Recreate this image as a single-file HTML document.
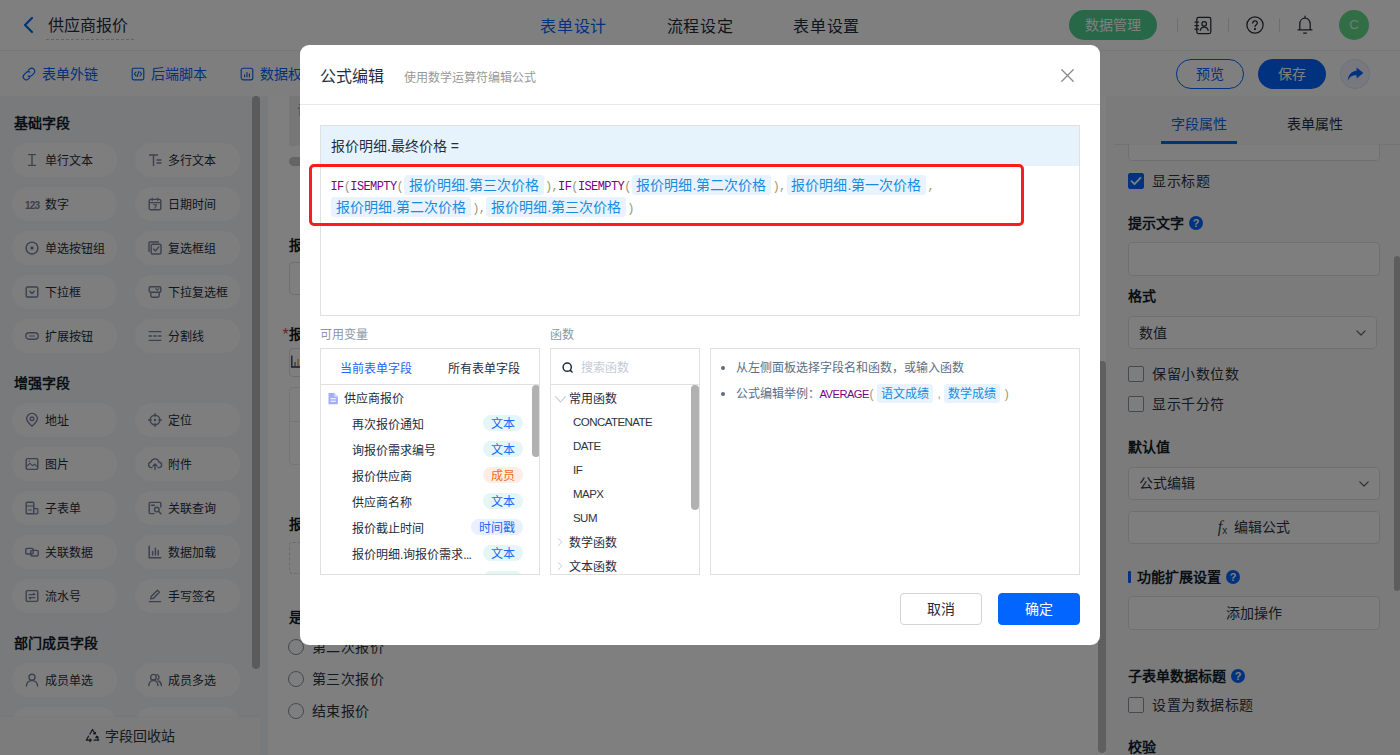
<!DOCTYPE html>
<html lang="zh-CN">
<head>
<meta charset="utf-8">
<title>公式编辑</title>
<style>
*{box-sizing:border-box;margin:0;padding:0}
html,body{width:1400px;height:755px;overflow:hidden;background:#fff}
body{font-family:"Liberation Sans",sans-serif;font-size:14px;color:#1f2d3d;position:relative}
.abs{position:absolute}
svg{display:block;overflow:visible}
/* ---------- top bar ---------- */
#top{position:absolute;left:0;top:0;width:1400px;height:51px;background:#fff;border-bottom:1px solid #ececec}
#top .back{position:absolute;left:22px;top:16px}
#top .ttl{position:absolute;left:46px;top:13px;width:88px;height:27px;line-height:26px;font-size:16px;padding-left:2px;border-bottom:1px dashed #c8c8c8;white-space:nowrap;color:#1f2d3d}
#top .tab{position:absolute;top:13.800px;line-height:26px;font-size:16px;letter-spacing:.75px;white-space:nowrap;color:#1f2d3d}
#top .tab.on{color:#0265ff}
#top .mgr{position:absolute;left:1069px;top:10px;width:88px;height:30px;border-radius:15px;background:#4dd090;color:#fff;font-size:14px;line-height:30px;text-align:center}
#top .sep{position:absolute;top:18px;width:1px;height:14px;background:#dcdcdc}
#top .av{position:absolute;left:1339px;top:10px;width:30px;height:30px;border-radius:15px;background:#62dc8c;color:#e9f7ee;font-size:13px;line-height:30px;text-align:center}
/* ---------- toolbar ---------- */
#bar{position:absolute;left:0;top:51px;width:1400px;height:45px;background:#fcfcfd}
#bar .lnk{position:absolute;top:12px;line-height:22px;font-size:14px;color:#0265ff;white-space:nowrap}
#bar .lnk svg{position:absolute;top:4px}
#bar .pv{position:absolute;left:1176px;top:8px;width:68px;height:30px;border-radius:15px;border:1px solid #0265ff;color:#0265ff;font-size:14px;line-height:28px;text-align:center;background:#fff}
#bar .sv{position:absolute;left:1258px;top:8px;width:68px;height:30px;border-radius:15px;background:#0265ff;color:#fff;font-size:14px;line-height:30px;text-align:center}
#bar .sh{position:absolute;left:1340px;top:8px;width:30px;height:30px;border-radius:15px;background:#eef3fd;border:1px solid #d6e2fa}
/* ---------- left panel ---------- */
#left{position:absolute;left:0;top:96px;width:268px;height:659px;background:#f3f5f9;overflow:hidden}
#left h4{position:absolute;left:14px;font-size:14px;font-weight:bold;line-height:20px;color:#141e2b;white-space:nowrap}
#left .p{position:absolute;width:105px;height:34px;border-radius:17px;background:#fdfdfe;font-size:12px;line-height:37px;color:#1f2d3d;white-space:nowrap;padding-left:33px}
#left .n123{position:absolute;left:13px;top:-.5px;font-size:10px;font-weight:bold;color:#76819e;letter-spacing:-.75px}
#left .p svg{position:absolute;left:12.800px;top:10px}
#left .c1{left:12px}#left .c2{left:135px}#left .c2 svg{left:13px}#left .c2{padding-left:32.500px}
#left .sb{position:absolute;left:252px;top:0;width:8px;height:573px;border-radius:4px;background:#b6b6b6}
#left .bin{position:absolute;left:0;top:621px;width:260px;height:38px;background:#f8f9fb;font-size:14px;line-height:38px;color:#2b3442;padding-left:105px;box-shadow:0 -1px 3px rgba(0,0,0,.04)}
#left .bin .rc{position:absolute;left:85px;top:11px}
/* ---------- center ---------- */
#mid{position:absolute;left:268px;top:96px;width:838px;height:659px;background:#fff;overflow:hidden}
#mid h5{position:absolute;left:21px;font-size:14px;font-weight:bold;line-height:20px;color:#141e2b;white-space:nowrap}
#mid .bx{position:absolute;left:21px;width:790px;border:1px solid #dfe1e6;border-radius:4px;background:#fff}
#mid .rd{position:absolute;left:20px;width:16px;height:16px;border-radius:8px;border:1px solid #8b93a8;background:#fff}
#mid .rl{position:absolute;left:44px;font-size:14px;letter-spacing:.4px;line-height:20px;color:#2b3442;white-space:nowrap}
#mid .vs{position:absolute;left:830px;top:264.500px;width:7.700px;height:392px;border-radius:4px;background:#bfbfbf}
/* ---------- right panel ---------- */
#right{position:absolute;left:1106px;top:96px;width:294px;height:659px;background:#f6f7f9;overflow:hidden}
#right .tb{position:absolute;top:18px;line-height:20px;font-size:14px;white-space:nowrap;color:#1f2d3d}
#right .tb.on{color:#0265ff}
#right .ul{position:absolute;left:55px;top:45px;width:76px;height:3px;background:#0265ff}
#right .hl{position:absolute;left:8px;top:48px;width:286px;height:1px;background:#e4e6ea}
#right .inp{position:absolute;left:22px;width:252px;height:34px;border:1px solid #dfe1e6;border-radius:4px;background:#fdfdfe}
#right .btn{text-align:center;line-height:32px;font-size:14px;color:#2b3442;white-space:nowrap}
#right .sel{line-height:32px;font-size:14px;color:#2b3442;padding-left:10px;white-space:nowrap}
#right .sel svg{position:absolute;right:10px;top:13px}
#right h5{position:absolute;left:22px;font-size:14px;font-weight:bold;line-height:20px;color:#141e2b;white-space:nowrap}
#right .cb{position:absolute;left:22px;width:16px;height:16px;border:1px solid #8b93a8;border-radius:2px;background:#fdfdfe}
#right .cb.on{background:#0265ff;border-color:#0265ff}
#right .lb{position:absolute;left:46px;font-size:14px;letter-spacing:.5px;line-height:20px;color:#2b3442;white-space:nowrap}
#right .q{position:absolute;width:14px;height:14px;border-radius:7px;background:#0265ff;color:#fff;font-size:11px;font-weight:bold;line-height:14px;text-align:center}
#right .sbar{position:absolute;left:288px;top:160px;width:6px;height:335px;border-radius:3px;background:#bababa}
/* ---------- overlay + modal ---------- */
#mask{position:absolute;left:0;top:0;width:1400px;height:755px;background:rgba(0,0,0,.5)}
#dlg{position:absolute;left:300px;top:45px;width:800px;height:600px;background:#fff;border-radius:9px}
#dlg .hd{position:absolute;left:0;top:0;width:800px;height:60px;border-bottom:1px solid #e9e9e9}
#dlg .hd b{position:absolute;left:19.500px;top:20px;font-size:16px;font-weight:normal;line-height:24px;color:#1f2d3d;white-space:nowrap}
#dlg .hd i{position:absolute;left:104px;top:22.500px;font-size:12px;font-style:normal;line-height:20px;color:#989898;white-space:nowrap}
#dlg .hd svg{position:absolute;left:761px;top:23.500px}
#ed{position:absolute;left:20px;top:80px;width:760px;height:191px;border:1px solid #e0e0e0;background:#fff}
#ed .eh{position:absolute;left:0;top:0;width:758px;height:40px;background:#e6f3fd;font-size:14px;line-height:40px;padding-left:10px;color:#1f2d3d;white-space:nowrap}
#ed .cm{position:absolute;left:9.500px;top:48px;width:700px;font-family:"Liberation Mono",monospace;font-size:12px;letter-spacing:-.6px;line-height:22px;color:#999977;white-space:nowrap}
#ed .cm .k{color:#770088}
#ed .cm>div{position:relative;top:1.500px}
#ed .cm .t{position:relative;top:-1.500px}
#ed .cm .t,#dlg .ex .t{display:inline-block;font-family:"Liberation Sans",sans-serif;font-size:14px;line-height:20px;height:20px;color:#178cdf;background:#e9f3fd;border-radius:3px;padding:0 4.800px;margin:0 1.400px 0 .9px;vertical-align:top;margin-top:1px;letter-spacing:0}
#red{position:absolute;left:9px;top:119px;width:715px;height:62px;border:3.500px solid #fb1d1a;border-radius:5px}
#dlg .cap{position:absolute;top:280px;font-size:12px;line-height:20px;color:#8c96a8;white-space:nowrap}
#dlg .pn{position:absolute;top:303px;height:227px;border:1px solid #e0e0e0;background:#fff;overflow:hidden}
#dlg .pn .ph{position:absolute;left:0;top:0;width:100%;height:36px;border-bottom:1px solid #e0e0e0}
#dlg .vsb{position:absolute;width:8px;border-radius:4px;background:#b1b1b1}
#pv .tb{position:absolute;top:10px;font-size:12px;line-height:20px;white-space:nowrap;color:#1f2d3d}
#pv .tb.on{color:#1d66fb}
#pv .it{position:absolute;margin-top:1px;left:31px;font-size:12px;line-height:20px;color:#1f2d3d;white-space:nowrap}
#pv .tg{position:absolute;margin-top:-.3px;right:16px;height:16px;border-radius:8px;padding:0 8px;font-size:12px;line-height:19px;white-space:nowrap;background:#e5f6f7;color:#1d66fb}
#pv .tg.m{background:#fdeee5;color:#f26b1d}
#pv .tg.d{background:#e9f0ff;color:#1d66fb}
#pf .it{position:absolute;font-size:12px;line-height:20px;color:#1f2d3d;white-space:nowrap}
#pf .fn{left:22px;margin-top:-.7px;font-size:11.500px;letter-spacing:-.55px;color:#2b3442}
#dlg .ex{position:absolute;left:24.500px;font-size:12px;line-height:20px;color:#5e6d82;white-space:nowrap}
#dlg .ex:before{content:"";position:absolute;left:-14.500px;top:8px;width:4px;height:4px;border-radius:2px;background:#5e6d82}
#dlg .ex .t{font-size:12px;padding:0 4px;margin:0 4.300px 0 3.700px;line-height:21px;height:19px;margin-top:-.5px}
#dlg .bt{position:absolute;top:548px;width:82px;height:32px;border-radius:4px;font-size:14px;line-height:30px;text-align:center;border:1px solid #d4d4d4;color:#1f2d3d;background:#fff}
#dlg .bt.ok{background:#0265ff;border-color:#0265ff;color:#fff}
</style>
</head>
<body>
<div id="top">
  <svg class="back" width="12" height="18" viewBox="0 0 12 18"><path d="M10 2 L3 9 L10 16" fill="none" stroke="#0265ff" stroke-width="2.2" stroke-linecap="round" stroke-linejoin="round"/></svg>
  <div class="ttl">供应商报价</div>
  <div class="tab on" style="left:540px">表单设计</div>
  <div class="tab" style="left:666.500px">流程设定</div>
  <div class="tab" style="left:793px">表单设置</div>
  <div class="mgr">数据管理</div>
  <div class="sep" style="left:1177px"></div>
  <div class="sep" style="left:1228px"></div>
  <div class="sep" style="left:1279px"></div>
  <svg class="abs" style="left:1194px;top:16px" width="18" height="19" viewBox="0 0 18 19" fill="none" stroke="#2b2e3b" stroke-width="1.250" stroke-linecap="round" stroke-linejoin="round"><rect x="2.800" y="1.400" width="14" height="16.200" rx="1.800"/><path d="M.9 6h3.600M.9 9.500h3.600M.9 13h3.600"/><circle cx="10.200" cy="7.800" r="2.300"/><path d="M6.200 14.400c.5-2.300 2-3.400 4-3.400s3.500 1.100 4 3.400"/></svg>
  <svg class="abs" style="left:1246px;top:16px" width="18" height="18" viewBox="0 0 18 18" fill="none" stroke="#2b2e3b" stroke-width="1.250" stroke-linecap="round" stroke-linejoin="round"><circle cx="9" cy="9" r="8.1"/><path d="M6.700 7.100c0-1.400 1-2.300 2.300-2.300s2.300.9 2.300 2.100c0 1.700-2.300 1.800-2.300 3.600"/><circle cx="9" cy="13" r=".5" fill="#2a2a2a"/></svg>
  <svg class="abs" style="left:1296px;top:15px" width="18" height="20" viewBox="0 0 18 20" fill="none" stroke="#2b2e3b" stroke-width="1.250" stroke-linecap="round" stroke-linejoin="round"><path d="M9 1.200v1.600M3.800 14.600V9c0-3.400 2.200-5.800 5.200-5.800s5.200 2.400 5.200 5.800v5.600M2 14.800h14M7.600 18h2.800"/></svg>
  <div class="av">C</div>
</div>
<div id="bar">
  <div class="lnk" style="left:42px"><svg style="left:-20px" width="14" height="14" viewBox="0 0 14 14" fill="none" stroke="#0265ff" stroke-width="1.150" stroke-linecap="round"><path d="M6.300 3.400l1.300-1.300a3 3 0 0 1 4.300 4.300l-2 2a3 3 0 0 1-3.600.5"/><path d="M7.700 10.600l-1.300 1.300a3 3 0 0 1-4.300-4.300l2-2a3 3 0 0 1 3.600-.5"/></svg>表单外链</div>
  <div class="lnk" style="left:151px"><svg style="left:-20px" width="14" height="14" viewBox="0 0 14 14" fill="none" stroke="#0265ff" stroke-width="1.150" stroke-linecap="round" stroke-linejoin="round"><rect x="1.200" y="1.200" width="11.600" height="11.600" rx="1.500"/><path d="M5 5L3.400 7 5 9M9 5l1.600 2L9 9M7.800 4.600L6.200 9.400"/></svg>后端脚本</div>
  <div class="lnk" style="left:260px"><svg style="left:-20px" width="14" height="14" viewBox="0 0 14 14" fill="none" stroke="#0265ff" stroke-width="1.150" stroke-linecap="round" stroke-linejoin="round"><rect x="1.200" y="1.200" width="11.600" height="11.600" rx="2"/><path d="M4.600 9.800V7.800M7 9.800V5.600M9.400 9.800V6.800"/></svg>数据权限</div>
  <div class="pv">预览</div>
  <div class="sv">保存</div>
  <div class="sh"><svg style="position:absolute;left:6px;top:7px" width="17" height="15" viewBox="0 0 17 15"><path d="M9.600 0.600L16.400 6 9.600 11.400V8.200C5.400 8 2.600 9.800.8 13.600 1.200 7.800 4.400 4.200 9.600 3.800Z" fill="#0265ff"/></svg></div>
</div>
<div id="left">
  <h4 style="top:17px">基础字段</h4>
  <div class="p c1" style="top:47px"><svg width="14" height="14" viewBox="0 0 14 14" fill="none" stroke="#77829e" stroke-width="1.400" stroke-linecap="round" stroke-linejoin="round" ><path d="M3.600 1.600h6.800M3.600 12.400h6.800M7 1.600v10.800"/></svg>单行文本</div>
  <div class="p c2" style="top:47px"><svg width="14" height="14" viewBox="0 0 14 14" fill="none" stroke="#77829e" stroke-width="1.400" stroke-linecap="round" stroke-linejoin="round" ><path d="M1.500 2h8M5.500 2v10.500M9 7h4M9 10h4"/></svg>多行文本</div>
  <div class="p c1" style="top:91px"><span class="n123">123</span>数字</div>
  <div class="p c2" style="top:91px"><svg width="14" height="14" viewBox="0 0 14 14" fill="none" stroke="#77829e" stroke-width="1.400" stroke-linecap="round" stroke-linejoin="round" ><rect x="1.200" y="2.400" width="11.600" height="10.400" rx="1.600"/><path d="M4.200 1v2.600M9.800 1v2.600M1.400 5.600h11.200M5.400 7.800h3.200l-1.800 3.400" stroke-width="1.100"/></svg>日期时间</div>
  <div class="p c1" style="top:135px"><svg width="14" height="14" viewBox="0 0 14 14" fill="none" stroke="#77829e" stroke-width="1.400" stroke-linecap="round" stroke-linejoin="round" ><circle cx="7" cy="7" r="5.900" stroke-width="1.450"/><circle cx="7" cy="7" r="1.750" fill="#77829e" stroke="none"/></svg>单选按钮组</div>
  <div class="p c2" style="top:135px"><svg width="14" height="14" viewBox="0 0 14 14" fill="none" stroke="#77829e" stroke-width="1.400" stroke-linecap="round" stroke-linejoin="round" ><rect x="3.200" y="3.200" width="9.800" height="9.800" rx="1.200"/><path d="M1 10.400V2.200C1 1.500 1.500 1 2.200 1h8.200M5.600 8l1.900 1.900L10.800 6"/></svg>复选框组</div>
  <div class="p c1" style="top:179px"><svg width="14" height="14" viewBox="0 0 14 14" fill="none" stroke="#77829e" stroke-width="1.400" stroke-linecap="round" stroke-linejoin="round" ><rect x="1.200" y="2" width="11.600" height="10" rx="1.200"/><path d="M4.800 6.200L7 8.400l2.200-2.200"/></svg>下拉框</div>
  <div class="p c2" style="top:179px"><svg width="14" height="14" viewBox="0 0 14 14" fill="none" stroke="#77829e" stroke-width="1.400" stroke-linecap="round" stroke-linejoin="round" ><rect x="1.200" y="1.800" width="11.600" height="5.400" rx="1.200"/><path d="M2.800 7.400v3.400c0 .9.500 1.400 1.400 1.400h5.600c.9 0 1.400-.5 1.400-1.400V7.400"/><path d="M7.800 3.600l1.500 1.500 1.500-1.500" stroke-width="1.100"/></svg>下拉复选框</div>
  <div class="p c1" style="top:223px"><svg width="14" height="14" viewBox="0 0 14 14" fill="none" stroke="#77829e" stroke-width="1.400" stroke-linecap="round" stroke-linejoin="round" ><rect x="0.800" y="3.800" width="12.400" height="6.400" rx="3.200"/><path d="M4.400 7h5.200" stroke-width="1.100"/></svg>扩展按钮</div>
  <div class="p c2" style="top:223px"><svg width="14" height="14" viewBox="0 0 14 14" fill="none" stroke="#77829e" stroke-width="1.400" stroke-linecap="round" stroke-linejoin="round" ><path d="M1.200 2.600h11.600M1.200 11.400h11.600"/><path d="M1.200 7h2.400M5.800 7h2.400M10.400 7h2.400"/></svg>分割线</div>
  <h4 style="top:277px">增强字段</h4>
  <div class="p c1" style="top:307px"><svg width="14" height="14" viewBox="0 0 14 14" fill="none" stroke="#77829e" stroke-width="1.400" stroke-linecap="round" stroke-linejoin="round" ><path d="M7 13.200C3.400 10 1.600 7.800 1.600 5.800a5.400 5.400 0 0 1 10.800 0C12.400 7.800 10.600 10 7 13.200z"/><circle cx="7" cy="5.800" r="1.800"/></svg>地址</div>
  <div class="p c2" style="top:307px"><svg width="14" height="14" viewBox="0 0 14 14" fill="none" stroke="#77829e" stroke-width="1.400" stroke-linecap="round" stroke-linejoin="round" ><circle cx="7" cy="7" r="4.800"/><circle cx="7" cy="7" r="1.200" fill="#77829e" stroke="none"/><path d="M7 .6v2.600M7 10.800v2.600M.6 7h2.600M10.800 7h2.600"/></svg>定位</div>
  <div class="p c1" style="top:351px"><svg width="14" height="14" viewBox="0 0 14 14" fill="none" stroke="#77829e" stroke-width="1.400" stroke-linecap="round" stroke-linejoin="round" ><rect x="1.200" y="1.600" width="11.600" height="10.800" rx="1.400"/><path d="M1.600 9.400L5 6.400l2.600 2.200 1.800-1.400 3 2.400" stroke-width="1.100"/><circle cx="4.400" cy="4.400" r=".7" fill="#77829e" stroke="none"/></svg>图片</div>
  <div class="p c2" style="top:351px"><svg width="14" height="14" viewBox="0 0 14 14" fill="none" stroke="#77829e" stroke-width="1.400" stroke-linecap="round" stroke-linejoin="round" ><path d="M4 10.600H3.400a2.800 2.800 0 0 1-.4-5.560A4.100 4.100 0 0 1 11 5.200a2.700 2.700 0 0 1-.2 5.400H10M7 12.600V7.200M5 9l2-2 2 2"/></svg>附件</div>
  <div class="p c1" style="top:395px"><svg width="14" height="14" viewBox="0 0 14 14" fill="none" stroke="#77829e" stroke-width="1.400" stroke-linecap="round" stroke-linejoin="round" ><rect x="1.200" y="1.200" width="7.600" height="11.600" rx="1"/><path d="M1.400 5h7.200M8.800 7.600h3.200a.800.800 0 0 1 .8.800v3.600a.800.800 0 0 1-.8.800H8.800M3.600 9h2.800" stroke-width="1.200"/></svg>子表单</div>
  <div class="p c2" style="top:395px"><svg width="14" height="14" viewBox="0 0 14 14" fill="none" stroke="#77829e" stroke-width="1.400" stroke-linecap="round" stroke-linejoin="round" ><path d="M12.800 6V2.400a1 1 0 0 0-1-1H2.200a1 1 0 0 0-1 1v9.200a1 1 0 0 0 1 1H6"/><circle cx="8.800" cy="8.600" r="2.300"/><path d="M10.600 10.400l2.400 2.400M3.400 4.200h3"/></svg>关联查询</div>
  <div class="p c1" style="top:439px"><svg width="14" height="14" viewBox="0 0 14 14" fill="none" stroke="#77829e" stroke-width="1.400" stroke-linecap="round" stroke-linejoin="round" ><rect x=".8" y="3.400" width="7.400" height="5.600" rx="1.200"/><rect x="5.800" y="5.400" width="7.400" height="5.600" rx="1.200"/></svg>关联数据</div>
  <div class="p c2" style="top:439px"><svg width="14" height="14" viewBox="0 0 14 14" fill="none" stroke="#77829e" stroke-width="1.400" stroke-linecap="round" stroke-linejoin="round" ><path d="M1.200 1.200v11.600h11.600M4.600 10V6.600M7.400 10V3.200M10.200 10V5.400" stroke-width="1.500"/></svg>数据加载</div>
  <div class="p c1" style="top:483px"><svg width="14" height="14" viewBox="0 0 14 14" fill="none" stroke="#77829e" stroke-width="1.400" stroke-linecap="round" stroke-linejoin="round" ><rect x="1.200" y="1.600" width="11.600" height="10.800" rx="1.400"/><path d="M4 5.600h6M4 8.600h6M8.400 4.200l1.600 1.400M5.600 10L4 8.600" stroke-width="1.100"/></svg>流水号</div>
  <div class="p c2" style="top:483px"><svg width="14" height="14" viewBox="0 0 14 14" fill="none" stroke="#77829e" stroke-width="1.400" stroke-linecap="round" stroke-linejoin="round" ><path d="M2.600 9.800l.6-2.400L9.400 1.200l2 2L5.200 9.400l-2.600.4zM1.400 12.600h11.200"/></svg>手写签名</div>
  <h4 style="top:537px">部门成员字段</h4>
  <div class="p c1" style="top:567px"><svg width="14" height="14" viewBox="0 0 14 14" fill="none" stroke="#77829e" stroke-width="1.400" stroke-linecap="round" stroke-linejoin="round" ><circle cx="7" cy="4.200" r="3"/><path d="M1.400 13c.2-3.400 2.400-5.400 5.600-5.400s5.400 2 5.600 5.400"/></svg>成员单选</div>
  <div class="p c2" style="top:567px"><svg width="14" height="14" viewBox="0 0 14 14" fill="none" stroke="#77829e" stroke-width="1.400" stroke-linecap="round" stroke-linejoin="round" ><circle cx="5.400" cy="4.200" r="2.800"/><path d="M.8 12.600c.2-3.200 2-5 4.600-5s4.400 1.800 4.600 5M8.800 1.600a2.800 2.800 0 0 1 .6 5.300M10.600 8c1.600.6 2.600 2.200 2.800 4.600"/></svg>成员多选</div>
  <div class="p c1" style="top:611px"><svg width="14" height="14" viewBox="0 0 14 14" fill="none" stroke="#77829e" stroke-width="1.400" stroke-linecap="round" stroke-linejoin="round" ><circle cx="7" cy="7" r="5"/></svg>部门单选</div>
  <div class="p c2" style="top:611px"><svg width="14" height="14" viewBox="0 0 14 14" fill="none" stroke="#77829e" stroke-width="1.400" stroke-linecap="round" stroke-linejoin="round" ><circle cx="7" cy="7" r="5"/></svg>部门多选</div>
  <div class="sb"></div>
  <div class="bin"><svg class="rc" width="15" height="14" viewBox="0 0 15 14" fill="none" stroke="#2b3442" stroke-width="1.250" stroke-linecap="round" stroke-linejoin="round"><path d="M4.900 6L7.500 1.500 10.100 6M8.600 5.600l1.500.4.400-1.500"/><path d="M3.500 8.200L1.300 12.200H6.200M5 10.900l1.200 1.300L5 13.500"/><path d="M11.500 8.200l2.200 4H9M13.200 9l-1.700-.8-.5 1.700" /></svg>字段回收站</div>
</div>
<div id="mid">
  <div class="abs" style="left:21px;top:0;width:790px;height:50px;background:#efefef"><span style="position:absolute;left:8px;top:3px;font-size:13px;color:#8f98ab">请</span></div>
  <div class="abs" style="left:21px;top:61px;width:300px;height:9px;border-radius:4.500px;background:#c8c8c8"></div>
  <h5 style="top:138.5px">报价说明</h5>
  <div class="bx" style="top:165.5px;height:33px"></div>
  <span class="abs" style="left:14.500px;top:228.500px;font-size:16px;color:#e0453a;line-height:20px">*</span>
  <h5 style="top:228px">报价明细</h5>
  <div class="bx" style="top:251.5px;height:29px"><svg style="position:absolute;left:1px;top:6px" width="14" height="13" viewBox="0 0 14 13" fill="none"><path d="M.8.500v11.500h12.500" stroke="#3a2c4a" stroke-width="1.300"/><path d="M4 11V7" stroke="#3f7fd0" stroke-width="1.400"/><path d="M7 11V4" stroke="#e89a3c" stroke-width="1.400"/><path d="M10 11V5.500" stroke="#e89a3c" stroke-width="1.400"/></svg></div>
  <div class="bx" style="top:291px;height:78px;border-color:#e9ebee"><div style="position:absolute;left:0;top:33px;width:100%;height:1px;background:#e9ebee"></div></div>
  <h5 style="top:417.5px">报价附件</h5>
  <div class="bx" style="top:445.5px;height:32px;border-style:dashed;border-color:#d2d5db"></div>
  <h5 style="top:511px">是否再次报价</h5>
  <div class="rd" style="top:543px"></div><div class="rl" style="top:541px">第二次报价</div>
  <div class="rd" style="top:575px"></div><div class="rl" style="top:573px">第三次报价</div>
  <div class="rd" style="top:607px"></div><div class="rl" style="top:605px">结束报价</div>
  <div class="vs"></div>
</div>
<div id="right">
  <div class="tb on" style="left:65px">字段属性</div>
  <div class="tb" style="left:181px">表单属性</div>
  <div class="ul"></div><div class="hl"></div>
  <div class="inp" style="top:34px;height:31px;clip-path:inset(14.500px 0 0 0)"></div>
  <div class="cb on" style="top:77px"><svg style="position:absolute;left:1px;top:2px" width="12" height="10" viewBox="0 0 12 10" fill="none" stroke="#fff" stroke-width="1.800" stroke-linecap="round" stroke-linejoin="round"><path d="M1.500 5.200l3 3L10.500 1.800"/></svg></div>
  <div class="lb" style="top:75px">显示标题</div>
  <h5 style="top:117px">提示文字</h5><div class="q" style="left:83px;top:120px">?</div>
  <div class="inp" style="top:146px"></div>
  <h5 style="top:189.500px">格式</h5>
  <div class="inp sel" style="top:219.5px;width:249px;height:33px">数值<svg width="10" height="6" viewBox="0 0 10 6" fill="none" stroke="#5a6272" stroke-width="1.200" stroke-linecap="round" stroke-linejoin="round"><path d="M.8.800L5 5l4.200-4.200"/></svg></div>
  <div class="cb" style="top:270px"></div><div class="lb" style="top:268px">保留小数位数</div>
  <div class="cb" style="top:300px"></div><div class="lb" style="top:298px">显示千分符</div>
  <h5 style="top:341px">默认值</h5>
  <div class="inp sel" style="top:370.5px;height:33px;line-height:30px">公式编辑<svg width="10" height="6" viewBox="0 0 10 6" fill="none" stroke="#5a6272" stroke-width="1.200" stroke-linecap="round" stroke-linejoin="round"><path d="M.8.800L5 5l4.200-4.200"/></svg></div>
  <div class="inp btn" style="top:414.5px;height:33px;line-height:30px"><span style="font-family:'Liberation Serif',serif;font-style:italic;font-size:16px;margin-right:7px;color:#3a4454">f<span style="font-size:10px;font-style:normal;font-family:'Liberation Sans',sans-serif;vertical-align:-2px">x</span></span>编辑公式</div>
  <div class="abs" style="left:22px;top:475px;width:3px;height:12px;background:#0265ff;border-radius:1px"></div>
  <h5 style="left:31px;top:471px">功能扩展设置</h5><div class="q" style="left:120px;top:474px">?</div>
  <div class="inp btn" style="top:500px">添加操作</div>
  <h5 style="top:570px">子表单数据标题</h5><div class="q" style="left:125px;top:573px">?</div>
  <div class="cb" style="top:601px"></div><div class="lb" style="top:599px">设置为数据标题</div>
  <h5 style="top:641px">校验</h5>
  <div class="sbar"></div>
</div>
<div id="mask"></div>
<div id="dlg">
  <div class="hd"><b>公式编辑</b><i>使用数学运算符编辑公式</i>
    <svg width="13" height="13" viewBox="0 0 13 13" fill="none" stroke="#8a8a8a" stroke-width="1.300" stroke-linecap="round"><path d="M.8.800l11.400 11.400M12.200.800L.8 12.200"/></svg></div>
  <div id="ed"><div class="eh">报价明细.最终价格 =</div>
    <div class="cm"><div><span class="k">IF</span>(<span class="k">ISEMPTY</span>(<span class="t">报价明细.第三次价格</span>),<span class="k">IF</span>(<span class="k">ISEMPTY</span>(<span class="t">报价明细.第二次价格</span>),<span class="t">报价明细.第一次价格</span>,</div><div><span class="t">报价明细.第二次价格</span>),<span class="t">报价明细.第三次价格</span>)</div></div>
  </div>
  <div id="red"></div>
  <div class="cap" style="left:20px">可用变量</div>
  <div class="cap" style="left:250px">函数</div>
  <div class="pn" id="pv" style="left:20px;width:220px">
    <div class="ph"><div class="tb on" style="left:19px">当前表单字段</div><div class="tb" style="left:127px">所有表单字段</div></div>
    <svg style="position:absolute;left:7px;top:44px" width="10.300" height="11.200" viewBox="0 0 11 12"><path d="M.5 0h6.300L10.500 3.700V12H.5z" fill="#a3aefa"/><path d="M6.600 0v3.900h3.900z" fill="#d4daff"/><path d="M2.600 6.200h5.800M2.600 8.800h5.800" stroke="#fff" stroke-width="1.200"/></svg>
    <div class="it" style="left:23px;top:39px">供应商报价</div>
    <div class="it" style="top:65px">再次报价通知</div><div class="tg " style="top:66px">文本</div>
    <div class="it" style="top:91px">询报价需求编号</div><div class="tg " style="top:92px">文本</div>
    <div class="it" style="top:117px">报价供应商</div><div class="tg m" style="top:118px">成员</div>
    <div class="it" style="top:143px">供应商名称</div><div class="tg " style="top:144px">文本</div>
    <div class="it" style="top:169px">报价截止时间</div><div class="tg d" style="top:170px">时间戳</div>
    <div class="it" style="top:195px">报价明细.询报价需求<span style="letter-spacing:-.7px">...</span></div><div class="tg " style="top:196px">文本</div>
    <div class="it" style="top:221px"></div><div class="tg " style="width:40px;top:222px"></div>
    <div class="vsb" style="left:210.500px;top:35.500px;height:72px"></div>
  </div>
  <div class="pn" id="pf" style="left:250px;width:150px">
    <div class="ph"><svg style="position:absolute;left:11px;top:12.500px" width="11.200" height="11.200" viewBox="0 0 12 12" fill="none" stroke="#1f2d3d" stroke-width="1.600" stroke-linecap="round"><circle cx="5.600" cy="5.600" r="4.400"/><path d="M9 9l1.800 1.800"/></svg>
      <div style="position:absolute;left:30px;top:9px;font-size:12px;line-height:20px;color:#c4cad6;white-space:nowrap">搜索函数</div></div>
    <svg style="position:absolute;left:4px;top:47px" width="11" height="7" viewBox="0 0 11 7" fill="none" stroke="#c3c9dc" stroke-width="1.100" stroke-linecap="round" stroke-linejoin="round"><path d="M.6.600l4.900 5.400L10.400.600"/></svg>
    <div class="it" style="left:17.500px;top:40px">常用函数</div>
    <div class="it fn" style="top:63.5px">CONCATENATE</div>
    <div class="it fn" style="top:87.5px">DATE</div>
    <div class="it fn" style="top:111.5px">IF</div>
    <div class="it fn" style="top:135.5px">MAPX</div>
    <div class="it fn" style="top:159.5px">SUM</div>
    <svg style="position:absolute;left:7px;top:189px" width="4.400" height="8" viewBox="0 0 5 9" fill="none" stroke="#c3c9dc" stroke-width="1.100" stroke-linecap="round" stroke-linejoin="round"><path d="M.6.600L4.200 4.500.6 8.400"/></svg><div class="it" style="left:17.500px;top:184px">数学函数</div>
    <svg style="position:absolute;left:7px;top:213px" width="4.400" height="8" viewBox="0 0 5 9" fill="none" stroke="#c3c9dc" stroke-width="1.100" stroke-linecap="round" stroke-linejoin="round"><path d="M.6.600L4.200 4.500.6 8.400"/></svg><div class="it" style="left:17.500px;top:208px">文本函数</div>
    <div class="vsb" style="left:140px;top:36px;height:124.500px"></div>
  </div>
  <div class="pn" style="left:410px;width:370px">
    <div class="ex" style="top:9px">从左侧面板选择字段名和函数，或输入函数</div>
    <div class="ex" style="top:35px">公式编辑举例：<span style="color:#770088;font-size:11.200px;letter-spacing:-.55px;margin-right:.5px">AVERAGE</span><span style="color:#999977">(</span><span class="t">语文成绩</span><span style="color:#999977">,</span><span class="t">数学成绩</span><span style="color:#999977">)</span></div>
  </div>
  <div class="bt" style="left:600px">取消</div>
  <div class="bt ok" style="left:698px">确定</div>
</div>
</body>
</html>
